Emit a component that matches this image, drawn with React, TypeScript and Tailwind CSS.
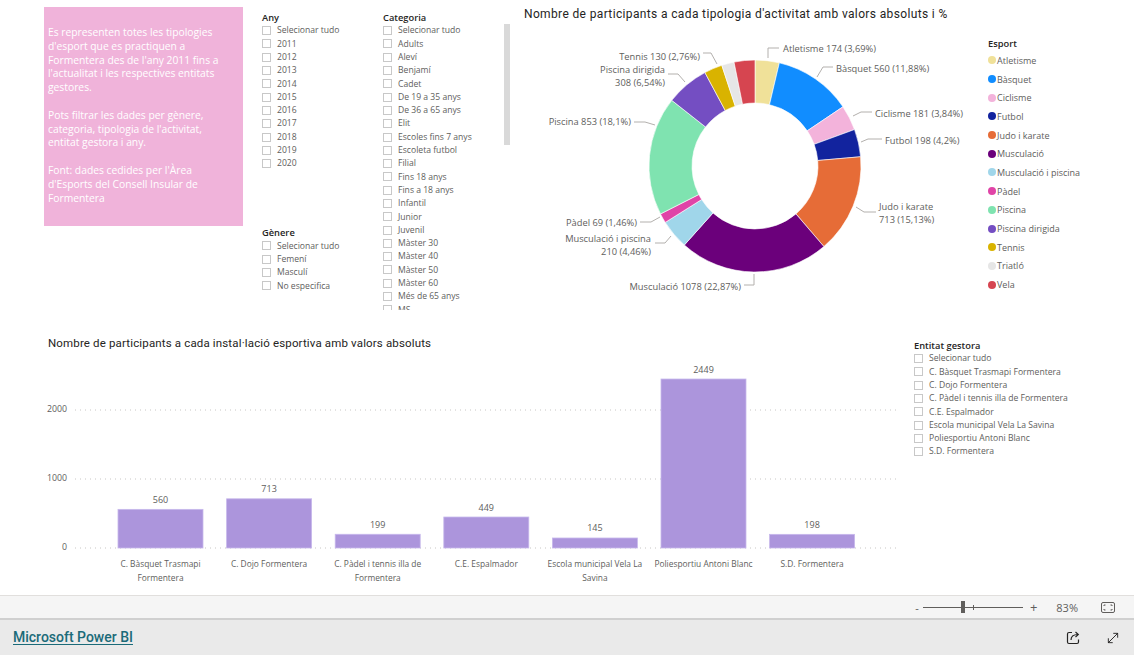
import React from "react";
import { MoveDiagonal } from "lucide-react";

const sports = [
  { name: "Atletisme", pct: 3.69, color: "#F0E199" },
  { name: "Bàsquet", pct: 11.88, color: "#118DFF" },
  { name: "Ciclisme", pct: 3.84, color: "#F3B3DB" },
  { name: "Futbol", pct: 4.2, color: "#12239E" },
  { name: "Judo i karate", pct: 15.13, color: "#E66C37" },
  { name: "Musculació", pct: 22.87, color: "#6B007B" },
  { name: "Musculació i piscina", pct: 4.46, color: "#A0D6EA" },
  { name: "Pàdel", pct: 1.46, color: "#E044A7" },
  { name: "Piscina", pct: 18.1, color: "#7FE3B0" },
  { name: "Piscina dirigida", pct: 6.54, color: "#744EC2" },
  { name: "Tennis", pct: 2.76, color: "#D9B300" },
  { name: "Triatló", pct: 1.9, color: "#E6E6E6" },
  { name: "Vela", pct: 3.17, color: "#D64550" },
];

type Label = { lines: string[]; x: number; y: number; anchor: "start" | "end"; pts: string };

const labels: Label[] = [
  { lines: ["Atletisme 174 (3,69%)"], x: 785, y: 48, anchor: "start", pts: "770,58 770,48 781,48" },
  { lines: ["Bàsquet 560 (11,88%)"], x: 838, y: 68, anchor: "start", pts: "819,77 825,67 835,67" },
  { lines: ["Ciclisme 181 (3,84%)"], x: 877, y: 113, anchor: "start", pts: "855,116 863,112 874,112" },
  { lines: ["Futbol 198 (4,2%)"], x: 887, y: 140, anchor: "start", pts: "863,142 870,139 884,139" },
  { lines: ["Judo i karate", "713 (15,13%)"], x: 881, y: 206, anchor: "start", pts: "858,207 866,212 878,212" },
  { lines: ["Musculació 1078 (22,87%)"], x: 743, y: 286, anchor: "end", pts: "756,274 756,285 746,285" },
  { lines: ["Musculació i piscina", "210 (4,46%)"], x: 653, y: 238, anchor: "end", pts: "673,236 667,243 657,243" },
  { lines: ["Pàdel 69 (1,46%)"], x: 639, y: 222, anchor: "end", pts: "662,217 653,222 642,222" },
  { lines: ["Piscina 853 (18,1%)"], x: 633, y: 121, anchor: "end", pts: "657,125 647,122 636,122" },
  { lines: ["Piscina dirigida", "308 (6,54%)"], x: 667, y: 69, anchor: "end", pts: "687,82 680,74 670,74" },
  { lines: ["Tennis 130 (2,76%)"], x: 702, y: 56, anchor: "end", pts: "705,53 713,53 719,64" },
];

function arcPath(cx: number, cy: number, R: number, r: number, a0: number, a1: number) {
  const p = (rad: number, a: number) => [cx + rad * Math.cos(a), cy + rad * Math.sin(a)];
  const large = a1 - a0 > Math.PI ? 1 : 0;
  const [x0, y0] = p(R, a0);
  const [x1, y1] = p(R, a1);
  const [x2, y2] = p(r, a1);
  const [x3, y3] = p(r, a0);
  return `M${x0} ${y0} A${R} ${R} 0 ${large} 1 ${x1} ${y1} L${x2} ${y2} A${r} ${r} 0 ${large} 0 ${x3} ${y3} Z`;
}

const years = ["Selecionar tudo", "2011", "2012", "2013", "2014", "2015", "2016", "2017", "2018", "2019", "2020"];
const generes = ["Selecionar tudo", "Femení", "Masculí", "No especifica"];
const categories = [
  "Selecionar tudo", "Adults", "Aleví", "Benjamí", "Cadet", "De 19 a 35 anys", "De 36 a 65 anys", "Elit",
  "Escoles fins 7 anys", "Escoleta futbol", "Filial", "Fins 18 anys", "Fins a 18 anys", "Infantil", "Junior",
  "Juvenil", "Màster 30", "Màster 40", "Màster 50", "Màster 60", "Més de 65 anys", "MS",
];
const entitats = [
  "Selecionar tudo", "C. Bàsquet Trasmapi Formentera", "C. Dojo Formentera", "C. Pàdel i tennis illa de Formentera",
  "C.E. Espalmador", "Escola municipal Vela La Savina", "Poliesportiu Antoni Blanc", "S.D. Formentera",
];

const bars = [
  { lines: ["C. Bàsquet Trasmapi", "Formentera"], v: 560 },
  { lines: ["C. Dojo Formentera"], v: 713 },
  { lines: ["C. Pàdel i tennis illa de", "Formentera"], v: 199 },
  { lines: ["C.E. Espalmador"], v: 449 },
  { lines: ["Escola municipal Vela La", "Savina"], v: 145 },
  { lines: ["Poliesportiu Antoni Blanc"], v: 2449 },
  { lines: ["S.D. Formentera"], v: 198 },
];

function Item({ text, h = "h-[13.3px]" }: { text: string; h?: string }) {
  return (
    <div className={`${h} shrink-0 flex items-center whitespace-nowrap`}>
      <span className="w-[9px] h-[9px] border border-[#c8c8c8] bg-white shrink-0" />
      <span className="ml-[6px] text-[8.6px] text-[#605e5c] leading-none">{text}</span>
    </div>
  );
}

function Donut() {
  let acc = 0;
  const cx = 757, cy = 166, R = 106, r = 63;
  return (
    <svg width={460} height={295} className="block">
      <g transform="translate(-520,-25)">
        {sports.map((s) => {
          const a0 = -Math.PI / 2 + (acc / 100) * Math.PI * 2;
          acc += s.pct;
          const a1 = -Math.PI / 2 + (acc / 100) * Math.PI * 2;
          return <path key={s.name} d={arcPath(cx, cy, R, r, a0, a1)} fill={s.color} stroke="#fff" strokeWidth={0.6} />;
        })}
        {labels.map((l, i) => (
          <g key={i}>
            <polyline points={l.pts} fill="none" stroke="#b3b0ad" strokeWidth={1} />
            {l.lines.map((t, j) => (
              <text
                key={j}
                x={l.x}
                y={l.y + j * 13}
                textAnchor={l.anchor}
                dominantBaseline="central"
                fontSize={9.3}
                fill="#605e5c"
                fontFamily="'Open Sans', sans-serif"
              >
                {t}
              </text>
            ))}
          </g>
        ))}
      </g>
    </svg>
  );
}

function BarChart() {
  const base = 548;
  const k = 0.069;
  return (
    <svg width={865} height={246} className="block">
      <g transform="translate(-40,-349)" fontFamily="'Open Sans', sans-serif">
        {[0, 1000, 2000].map((v) => (
          <g key={v}>
            <line x1={75} x2={900} y1={base - v * k} y2={base - v * k} stroke="#c8c6c4" strokeWidth={1} strokeDasharray="1 4" />
            <text x={67} y={base - v * k - 1} textAnchor="end" dominantBaseline="central" fontSize={8.8} fill="#605e5c">
              {v}
            </text>
          </g>
        ))}
        {bars.map((b, i) => {
          const x = 118 + i * 108.6;
          const top = base - b.v * k;
          const c = x + 42.5;
          return (
            <g key={i}>
              <rect x={x} y={top} width={85} height={base - top} fill="#ac95dc" stroke="#c7b8ec" strokeWidth={0.8} />
              <text x={c} y={top - 10} textAnchor="middle" dominantBaseline="central" fontSize={9} fill="#605e5c">
                {b.v}
              </text>
              {b.lines.map((t, j) => (
                <text key={j} x={c} y={563 + j * 14} textAnchor="middle" dominantBaseline="central" fontSize={8.4} fill="#605e5c">
                  {t}
                </text>
              ))}
            </g>
          );
        })}
      </g>
    </svg>
  );
}

export default function App() {
  const slicerTitle = "h-[13px] shrink-0 leading-[13px] text-[9.3px] font-semibold text-[#252423] whitespace-nowrap";
  return (
    <div className="w-[1134px] h-[655px] flex flex-col bg-white overflow-hidden font-['Open_Sans',sans-serif]">
      {/* canvas */}
      <div className="h-[595px] shrink-0 flex flex-col">
        <div className="h-[322px] flex shrink-0">
          {/* text box */}
          <div className="ml-[44px] mt-[7px] w-[199px] h-[219px] shrink-0 bg-[#f0b3da] pt-[19px] pl-[4px] text-white text-[10.3px] leading-[13.8px] whitespace-nowrap">
            <div>Es representen totes les tipologies</div>
            <div>d'esport que es practiquen a</div>
            <div>Formentera des de l'any 2011 fins a</div>
            <div>l'actualitat i les respectives entitats</div>
            <div>gestores.</div>
            <div>&nbsp;</div>
            <div>Pots filtrar les dades per gènere,</div>
            <div>categoria, tipologia de l'activitat,</div>
            <div>entitat gestora i any.</div>
            <div>&nbsp;</div>
            <div>Font: dades cedides per l'Àrea</div>
            <div>d'Esports del Consell Insular de</div>
            <div>Formentera</div>
          </div>
          {/* slicers */}
          <div className="ml-[19px] mt-[11px] flex shrink-0">
            <div className="w-[121px] flex flex-col">
              <div className={slicerTitle}>Any</div>
              {years.map((y) => (
                <Item key={y} text={y} />
              ))}
              <div className={`${slicerTitle} mt-[56px]`}>Gènere</div>
              {generes.map((g) => (
                <Item key={g} text={g} />
              ))}
            </div>
            <div className="w-[127px] flex">
              <div className="w-[121px] flex flex-col">
                <div className={slicerTitle}>Categoria</div>
                <div className="h-[286px] overflow-hidden flex flex-col">
                  {categories.map((c) => (
                    <Item key={c} text={c} />
                  ))}
                </div>
              </div>
              <div className="w-[6px] h-[121px] mt-[13px] bg-[#d9d9d9]" />
            </div>
          </div>
          {/* donut visual */}
          <div className="ml-[8px] w-[460px] shrink-0 flex flex-col">
            <div className="h-[25px] pt-[6px] pl-[6px] font-['Roboto',sans-serif] text-[12px] tracking-[0.36px] text-[#252423] leading-[16px] whitespace-nowrap">
              Nombre de participants a cada tipologia d'activitat amb valors absoluts i %
            </div>
            <Donut />
          </div>
          {/* legend */}
          <div className="pl-[10px] pt-[37px] flex flex-col">
            <div className="h-[14px] leading-[14px] text-[9.3px] font-semibold text-[#252423]">Esport</div>
            {sports.map((s) => (
              <div key={s.name} className="h-[18.7px] flex items-center whitespace-nowrap">
                <span className="w-[8px] h-[8px] rounded-full shrink-0" style={{ backgroundColor: s.color }} />
                <span className="ml-[1px] text-[9px] text-[#605e5c] leading-none">{s.name}</span>
              </div>
            ))}
          </div>
        </div>
        {/* bottom row */}
        <div className="flex flex-1">
          <div className="ml-[40px] w-[865px] shrink-0 flex flex-col">
            <div className="h-[27px] pt-[13px] pl-[8px] font-['Roboto',sans-serif] text-[11.5px] tracking-[0.15px] text-[#252423] leading-[16px] whitespace-nowrap">
              Nombre de participants a cada instal·lació esportiva amb valors absoluts
            </div>
            <BarChart />
          </div>
          <div className="pl-[9px] pt-[17px] flex flex-col">
            <div className={slicerTitle}>Entitat gestora</div>
            {entitats.map((e) => (
              <Item key={e} text={e} h="h-[13.3px]" />
            ))}
          </div>
        </div>
      </div>
      {/* toolbar */}
      <div className="h-[25px] shrink-0 border-t border-[#e1dfdd] border-b-2 border-b-[#d0d0d0] bg-[#f5f5f5] flex items-center justify-end pr-[19px] text-[#605e5c]">
        <span className="text-[11px] leading-none mr-[4px]">-</span>
        <div className="relative w-[100px] h-[12px] flex items-center">
          <div className="w-full h-[1px] bg-[#605e5c]" />
          <div className="absolute left-[38px] top-0 w-[4px] h-[12px] bg-[#605e5c]" />
          <div className="absolute left-[50px] top-[4px] w-[1px] h-[5px] bg-[#605e5c]" />
        </div>
        <span className="text-[13px] leading-none ml-[7px]">+</span>
        <span className="text-[11px] leading-none ml-[19px]">83%</span>
        <svg width={14} height={11} viewBox="0 0 14 11" className="ml-[23px]">
          <rect x={0.5} y={0.5} width={13} height={10} rx={1.5} fill="none" stroke="#605e5c" strokeWidth={1} />
          <path d="M3 4V3h1.5M9.5 3H11v1M11 7v1H9.5M4.5 8H3V7" fill="none" stroke="#605e5c" strokeWidth={1} />
        </svg>
      </div>
      {/* footer */}
      <div className="flex-1 bg-[#eaeaea] flex items-center pl-[13px] pr-[13px]">
        <span className="font-['Roboto',sans-serif] text-[14px] font-medium text-[#1b6b79] underline underline-offset-2">
          Microsoft Power BI
        </span>
        <div className="ml-auto flex items-center gap-[24px]">
          <svg width={16} height={16} viewBox="0 0 16 16" fill="none" stroke="#252423" strokeWidth={1.2}>
            <path d="M7 2.5H4A1.5 1.5 0 0 0 2.5 4v8A1.5 1.5 0 0 0 4 13.5h8a1.5 1.5 0 0 0 1.5-1.5V9.5" />
            <path d="M6 10c0-3.5 2.5-5.5 7-5.5" />
            <path d="M10.5 2l2.8 2.5-2.8 2.5" />
          </svg>
          <MoveDiagonal size={16} strokeWidth={1.4} color="#252423" />
        </div>
      </div>
    </div>
  );
}
